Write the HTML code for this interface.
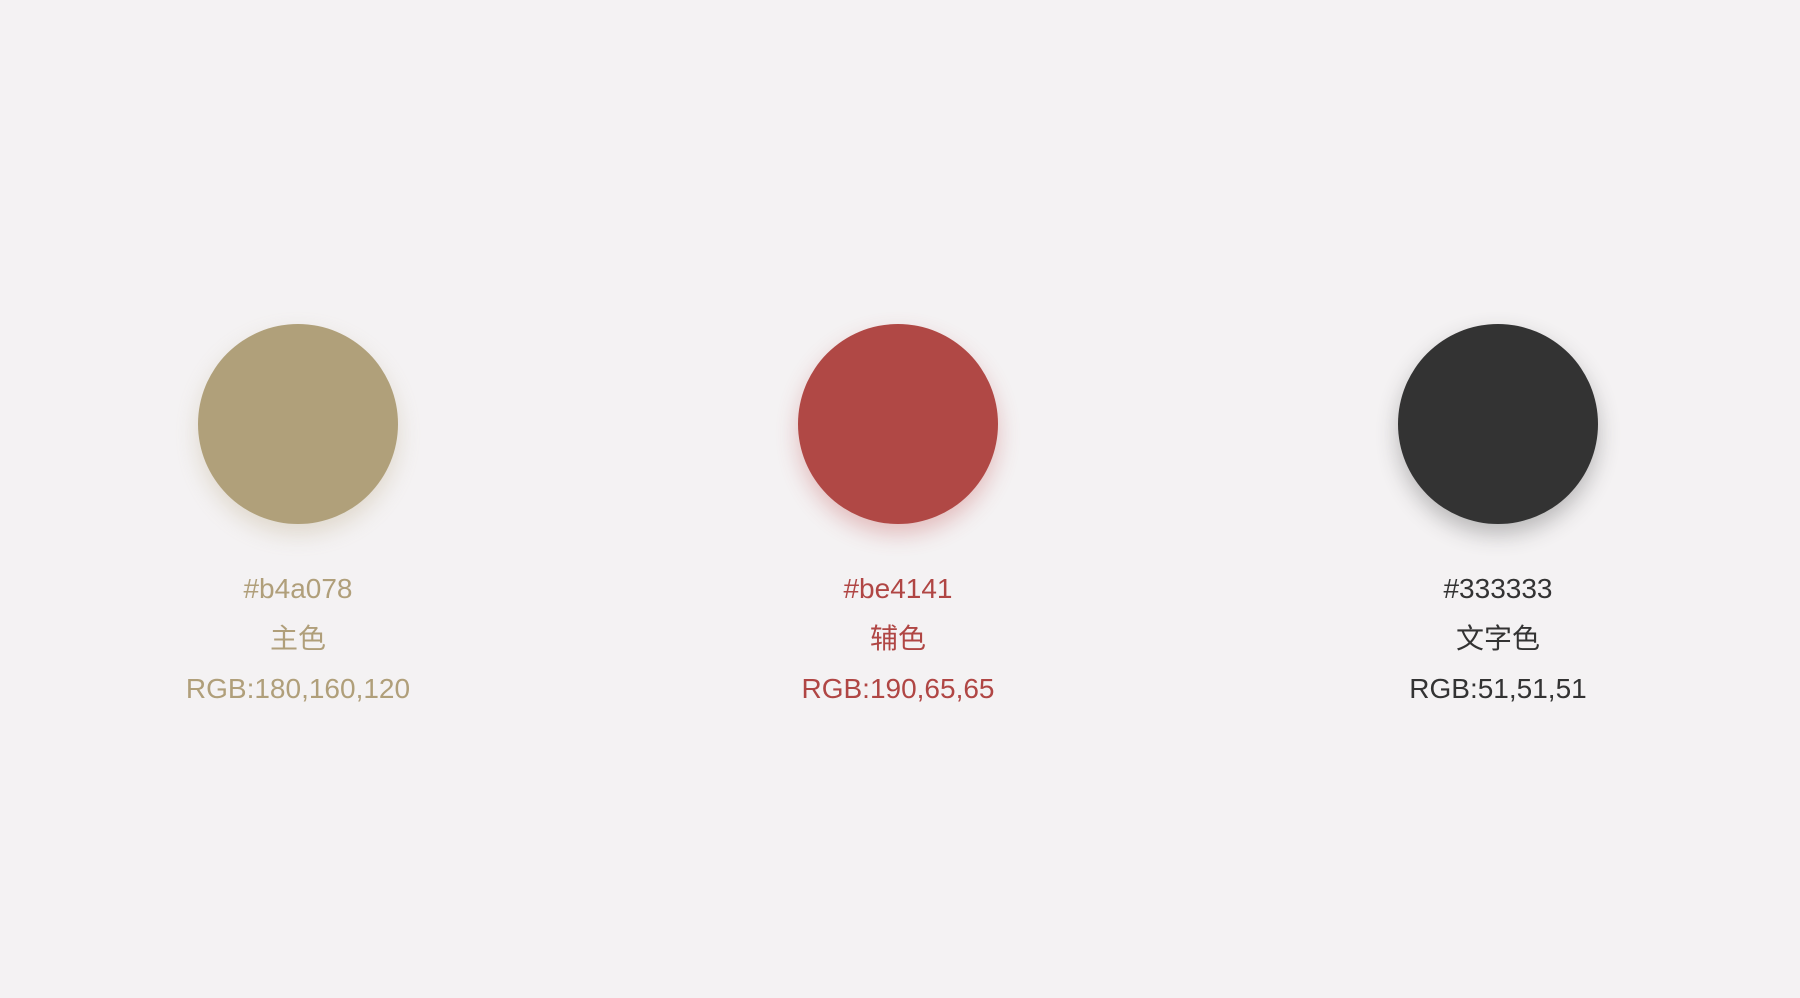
<!DOCTYPE html>
<html><head><meta charset="utf-8"><style>
html,body{margin:0;padding:0;width:1800px;height:998px;background:#f4f2f3;overflow:hidden;font-family:"Liberation Sans","Noto Sans CJK SC",sans-serif;}
.col{position:absolute;top:324px;width:400px;text-align:center;}
.c{width:200px;height:200px;border-radius:50%;margin:0 auto;}
.t{font-size:28px;line-height:50px;}
.t1{margin-top:40px;}
</style></head><body>
<div class="col" style="left:98px;color:#b09f7a">
<div class="c" style="background:#b0a07a;box-shadow:0 10px 22px rgba(180,160,120,0.3)"></div>
<div class="t t1">#b4a078</div><div class="t">主色</div><div class="t">RGB:180,160,120</div></div>
<div class="col" style="left:698px;color:#b04644">
<div class="c" style="background:#b04845;box-shadow:0 10px 22px rgba(190,65,65,0.3)"></div>
<div class="t t1">#be4141</div><div class="t">辅色</div><div class="t">RGB:190,65,65</div></div>
<div class="col" style="left:1298px;color:#333">
<div class="c" style="background:#333;box-shadow:0 10px 22px rgba(51,51,51,0.3)"></div>
<div class="t t1">#333333</div><div class="t">文字色</div><div class="t">RGB:51,51,51</div></div>
</body></html>
